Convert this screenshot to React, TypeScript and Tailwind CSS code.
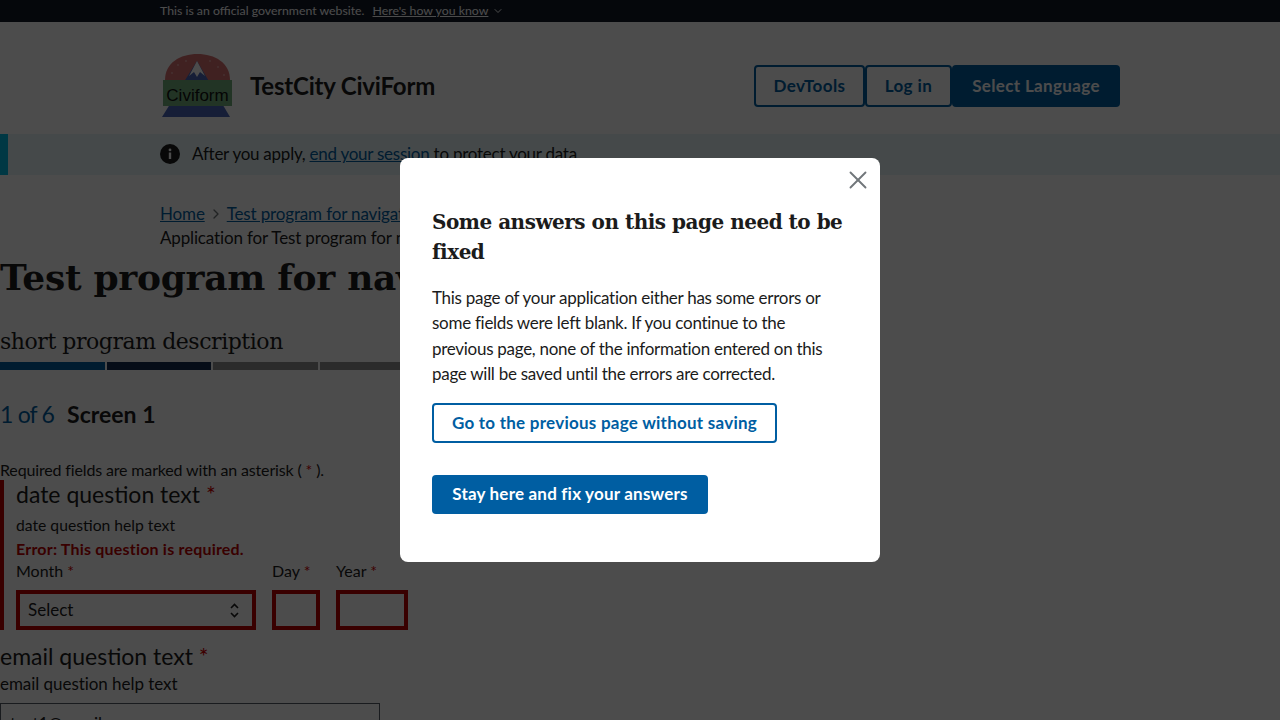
import React from 'react';
import { ChevronDown, ChevronRight, X } from 'lucide-react';

const Req = () => <span className="text-[#d00000]">*</span>;

const Logo = () => (
  <svg width="74" height="66" viewBox="0 0 74 66" className="shrink-0">
    <path d="M5 27 C5 10 20 1 37.5 1 C55 1 70 10 70 27 Z" fill="#d87070" />
    <circle cx="18" cy="12" r="0.8" fill="#f4c0c0" />
    <circle cx="26" cy="8" r="0.8" fill="#f4c0c0" />
    <circle cx="12" cy="20" r="0.8" fill="#f4c0c0" />
    <circle cx="50" cy="8" r="0.8" fill="#f4c0c0" />
    <circle cx="58" cy="14" r="0.8" fill="#f4c0c0" />
    <circle cx="64" cy="22" r="0.8" fill="#f4c0c0" />
    <path d="M37 8 L70 64 L2 64 Z" fill="#4a66b8" />
    <path d="M37 8 L45 23 L40 19 L37 24 L34 19 L29 23 Z" fill="#ffffff" />
    <rect x="3" y="27" width="69" height="26" fill="#74b07c" />
    <text x="37.5" y="48" textAnchor="middle" fontFamily="Liberation Sans, sans-serif" fontSize="17" fill="#111">Civiform</text>
  </svg>
);

function Page() {
  return (
    <div className="h-[720px] overflow-hidden bg-white text-[#1b1b1b] font-['Lato',sans-serif]">
      {/* gov banner */}
      <div className="h-[22px] bg-[#111827] pl-[160px] flex items-center text-[12.3px] text-white">
        <span>This is an official government website.</span>
        <span className="ml-2 underline">Here's how you know</span>
        <ChevronDown className="ml-1 w-3 h-3" />
      </div>

      <header className="h-[112px] pt-4 px-[160px] flex items-center justify-between">
        <div className="flex items-center gap-4">
          <Logo />
          <span className="text-[24px] font-bold tracking-[-0.2px]">TestCity CiviForm</span>
        </div>
        <div className="flex">
          <button className="h-[42px] w-[111px] border-2 border-[#005ea2] rounded text-[#005ea2] font-bold text-[17px] tracking-[0.4px]">DevTools</button>
          <button className="h-[42px] w-[87px] border-2 border-[#005ea2] rounded text-[#005ea2] font-bold text-[17px] tracking-[0.4px]">Log in</button>
          <button className="h-[42px] w-[168px] bg-[#005ea2] rounded text-white font-bold text-[17px] tracking-[0.35px]">Select Language</button>
        </div>
      </header>

      <div className="h-[41px] pb-[2px] bg-[#e7f6f8] border-l-8 border-[#00bde3] pl-[152px] flex items-center gap-[12px] text-[17px] tracking-[-0.25px]">
        <svg width="20" height="20" viewBox="0 0 20 20" className="shrink-0">
          <circle cx="10" cy="10" r="10" fill="#1b1b1b" />
          <rect x="8.8" y="8.5" width="2.4" height="6.5" fill="#ffffff" />
          <circle cx="10" cy="5.9" r="1.4" fill="#ffffff" />
        </svg>
        <span>After you apply, <span className="underline text-[#005ea2]">end your session</span> to protect your data</span>
      </div>

      <main>
        <div className="mt-[27px] pl-[160px] text-[17px] leading-6 tracking-[-0.15px]">
          <div className="flex items-center">
            <span className="underline text-[#005ea2]">Home</span>
            <ChevronRight className="w-4 h-4 mx-[3px] text-[#71767a]" />
            <span className="underline text-[#005ea2]">Test program for navigation tests</span>
          </div>
          <div>Application for Test program for navigation tests</div>
        </div>
        <h1 className="mt-[2px] h-[50px] leading-[50px] text-[36px] font-bold font-['DejaVu_Serif',serif] tracking-[-0.3px] whitespace-nowrap">Test program for navigation tests</h1>
        <p className="mt-[26px] h-[28px] leading-[28px] text-[22px] font-['DejaVu_Serif',serif] tracking-[-0.45px]">short program description</p>
        <div className="mt-[6px] w-[638px] flex gap-[2px]">
          <div className="h-2 flex-1 bg-[#005ea2]" />
          <div className="h-2 flex-1 bg-[#162e51]" />
          <div className="h-2 flex-1 bg-[#919191]" />
          <div className="h-2 flex-1 bg-[#919191]" />
          <div className="h-2 flex-1 bg-[#919191]" />
          <div className="h-2 flex-1 bg-[#919191]" />
        </div>
        <div className="mt-[29px] h-[30px] flex items-center text-[23px]">
          <span className="text-[#005ea2] tracking-[-0.8px]">1 of 6</span>
          <span className="ml-[13px] font-bold">Screen 1</span>
        </div>
        <p className="mt-[31px] h-[20px] leading-[20px] text-[16px] tracking-[-0.15px]">Required fields are marked with an asterisk ( <Req /> ).</p>

        <section className="h-[150px] border-l-4 border-[#c00000] pl-3">
          <div className="h-[30px] leading-[28px] text-[23px]">date question text <Req /></div>
          <div className="mt-[3px] h-[24px] leading-[24px] text-[15.7px]">date question help text</div>
          <div className="h-[24px] leading-[24px] text-[16px] font-bold tracking-[0.2px] text-[#c00000]">Error: This question is required.</div>
          <div className="flex gap-4">
            <div>
              <div className="h-[20px] leading-[20px] text-[16px]">Month <Req /></div>
              <div className="mt-[9px] w-[240px] h-[40px] border-4 border-[#c00000] flex items-center justify-between pl-2 pr-[13px] text-[17px]">
                <span>Select</span>
                <svg width="9" height="15" viewBox="0 0 9 15" fill="none" stroke="#1b1b1b" strokeWidth="1.6"><path d="M1 5 L4.5 1.5 L8 5" /><path d="M1 10 L4.5 13.5 L8 10" /></svg>
              </div>
            </div>
            <div>
              <div className="h-[20px] leading-[20px] text-[16px]">Day <Req /></div>
              <div className="mt-[9px] w-[48px] h-[40px] border-4 border-[#c00000]" />
            </div>
            <div>
              <div className="h-[20px] leading-[20px] text-[16px]">Year <Req /></div>
              <div className="mt-[9px] w-[72px] h-[40px] border-4 border-[#c00000]" />
            </div>
          </div>
        </section>

        <div className="mt-[12px] h-[30px] leading-[28px] text-[23px]">email question text <Req /></div>
        <div className="h-[24px] leading-[24px] text-[17px] tracking-[-0.05px]">email question help text</div>
        <div className="mt-[7px] w-[380px] h-[40px] border border-[#565c65] pl-[9px] pt-[7px] text-[17px]">test1@email.com</div>
      </main>
    </div>
  );
}

export default function App() {
  return (
    <div>
      <Page />
      {/* modal */}
      <div className="fixed inset-0 bg-black/70 flex items-center justify-center">
        <div className="relative w-[480px] h-[404px] bg-white rounded-lg px-8 pt-[49px] font-['Lato',sans-serif] text-[#1b1b1b]">
          <X className="absolute top-[7px] right-[7px] w-[30px] h-[30px] text-[#71767a]" strokeWidth={1.5} />
          <h2 className="text-[20px] leading-[30px] font-bold font-['DejaVu_Serif',serif] tracking-[-0.5px]">Some answers on this page need to be fixed</h2>
          <p className="mt-[18px] text-[17px] leading-[25.4px] tracking-[-0.28px]">This page of your application either has some errors or some fields were left blank. If you continue to the previous page, none of the information entered on this page will be saved until the errors are corrected.</p>
          <button className="block mt-4 h-[40px] w-[345px] border-2 border-[#005ea2] rounded text-[#005ea2] font-bold text-[17px] tracking-[0.25px]">Go to the previous page without saving</button>
          <button className="block mt-8 h-[39px] w-[276px] bg-[#005ea2] rounded text-white font-bold text-[17px] tracking-[0.2px]">Stay here and fix your answers</button>
        </div>
      </div>
    </div>
  );
}
